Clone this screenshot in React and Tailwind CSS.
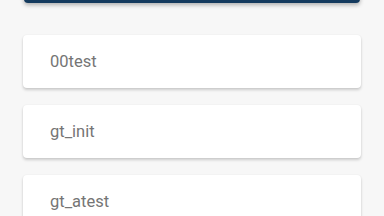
import React from 'react';

const items = ['00test', 'gt_init', 'gt_atest'];

export default function App() {
  return (
    <div className="w-[384px] h-[216px] overflow-hidden bg-[#f7f7f7]" style={{ fontFamily: 'Roboto, "Noto Sans", sans-serif' }}>
      <div className="mx-[24px] -mt-[20px] h-[23px] rounded-b-[4px] bg-[#143a5e] shadow-[0_2px_4px_rgba(0,0,0,0.3)]" />
      <div className="flex flex-col gap-[17px] px-[23px] pt-[32px]">
        {items.map(name => (
          <div key={name} className="h-[53px] shrink-0 flex items-center rounded-[4px] bg-white pl-[27px] pt-[2px] shadow-[0_2px_3px_rgba(0,0,0,0.18),0_0_2px_rgba(0,0,0,0.06)]">
            <span className="text-[16.5px] text-[#757575]">{name}</span>
          </div>
        ))}
      </div>
    </div>
  );
}
